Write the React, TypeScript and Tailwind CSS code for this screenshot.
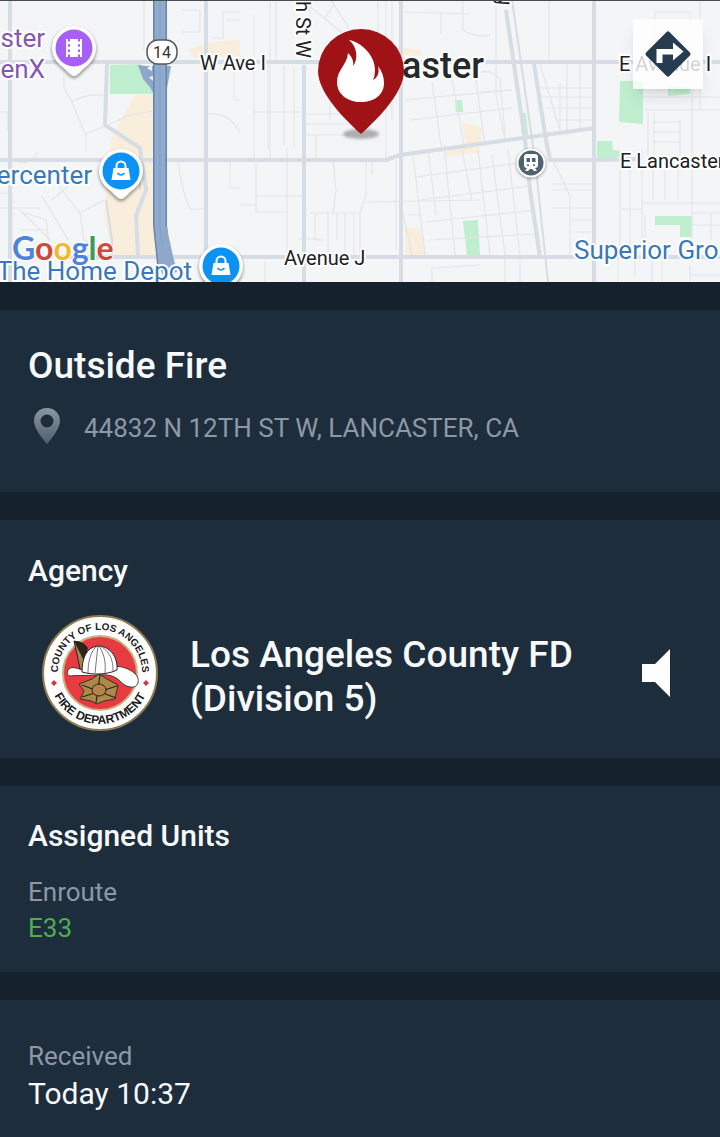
import type { ReactNode } from 'react';

const PARKS = [
  '110,65 140,64 152,78 155,94 110,94',
  '620,81 643,81 643,124 619,122',
  '668,86 690,88 690,94 668,96',
  '597,141 612,141 613,150 630,152 616,158 597,161',
  '655,216 692,216 692,237 680,237 680,225 655,225',
  '463,221 478,220 480,255 467,255',
  '455,100 462,100 463,112 456,112',
  '520,113 526,113 528,135 522,135',
];

const SANDS = [
  '112,136 135,95 155,95 155,256 113,256 104,215 108,165',
  '188,50 209,42 240,40 240,56 195,58',
  '405,228 420,228 425,255 406,255',
  '462,122 482,128 480,152 445,157 444,152 466,146',
  '403,48 420,50 422,56 403,55',
];

const MINOR = [
  'M0 112H8V130M64 75V88L72 102L86 136V152M72 102Q82 94 104 95M86 134Q110 124 130 115L153 111M144 0V50M0 208H40M0 193H12V250M14 160Q28 168 38 152M20 210L50 240M20 230H48M42 196L68 240M58 185L80 213L104 200M52 200L86 170M50 250L46 220L22 212M80 213L84 240L110 255',
  'M178 162Q182 192 190 209H204M230 162V188H240M208 114Q230 112 240 133M234 64V100H240M181 10H200V32H182M212 38H223V12H240M227 20H240',
  'M254 15V160M254 112H300M276 0V62M284 65V146M268 60V150M303 135H350M316 135V160M330 65V120M304 114H350M303 124H348M294 70V148M270 0V160M310 0V30M331 0L350 30M308 5L345 35M334 4L325 18M378 0V38M386 0V160M392 0V120M400 0V60M402 12L470 14M441 12L441 34M463 0V30Q475 38 490 35',
  'M256 160V212H287V255M287 148V230M256 196H302M240 205H256M333 160L336 190L333 213M366 160V195L360 213M360 213V255M310 213H360M315 213V240H325M328 213V255M345 213V255M337 213V240M354 213V255M365 202L480 200M300 239H320M396 160V250M372 160V175',
  'M413 155L425 255M428 150L436 215M444 145L455 255M462 150L472 200M478 150L490 255M416 177L525 162M420 200L530 186M425 222L536 210M430 240L535 234M492 155L505 255M508 150L520 255M408 215H422M405 100L512 90M410 120L512 108M432 82L442 152M452 80L465 150M476 80L485 146M496 0V95L505 140',
  'M402 210L412 255M432 282V268L480 265M505 255V282M520 255V282M480 72Q494 70 500 80L505 135M480 92L512 90M549 0V60M567 64V135M580 64V130M560 83V135M538 88H595M542 97H595M545 108H595M555 120H595M540 64L560 130M548 150L570 196V255M553 208H595M571 220H595M571 232H595M552 190H595M552 184H595',
  'M655 10V55M656 12H690V30M700 0V28M644 110H720M642 97H720M648 112V160M654 112V160M680 120V160M654 122H680M654 132H680M654 142H680M692 90V255M700 84V110H720M672 84V96M642 150V240M630 160V255M622 209H642M642 203H720M653 160V200M665 160V200M678 160V200M711 213V240M692 213H720M620 162V255M692 225H720M645 215V250M652 257V282M662 257V282M618 260V282M690 275H720M690 265V282M635 260V275M210 257V282M265 262V282M400 260V282',
];

const MAJOR = [
  { d: 'M10 0V282M206 0V282', w: 4 },
  { d: 'M0 62H720', w: 4 },
  { d: 'M0 160H386L400 155L595 128', w: 4 },
  { d: 'M60 257H720', w: 4 },
  { d: 'M304 65V282', w: 4 },
  { d: 'M401 0V282', w: 4 },
  { d: 'M594 0V282', w: 4 },
  { d: 'M548 160L595 160L640 159', w: 4 },
  { d: 'M506 10L525 140L530 190L540 257', w: 4 },
  { d: 'M534 64L546 140L550 160', w: 4 },
  { d: 'M107 64L105 125L140 148L146 190L136 216L138 255', w: 4 },
  { d: 'M106 200L112 240V257M140 150V190', w: 2 },
  { d: 'M512 0L535 160L543 235L548 282', w: 2 },
];

const LABEL = 'font-[Roboto,sans-serif] [paint-order:stroke] stroke-white [stroke-width:4px] [stroke-linejoin:round]';

function PoiPin({ x, y, color, children }: { x: number; y: number; color: string; children: ReactNode }) {
  return (
    <g transform={`translate(${x} ${y})`}>
      <path d="M0 29C-4 29-8 23-14 18A22.500 22.500 0 1 1 14 18C8 23 4 29 0 29Z" fill="#000" opacity=".35" transform="translate(0 1.500)" filter="url(#soft)" />
      <path d="M0 28C-4 28-7 22-14 17A22 22 0 1 1 14 17C7 22 4 28 0 28Z" fill="#fff" />
      <circle r="18.500" fill={color} />
      {children}
    </g>
  );
}

function Bag() {
  return (
    <g>
      <path d="M-7.500-3H7.500L9.500 9H-9.500Z" fill="#fff" />
      <path d="M-4.500-2V-5A4.500 4.500 0 0 1 4.500-5V-2" fill="none" stroke="#fff" strokeWidth="2" />
      <path d="M-3.500 2Q0 6 3.500 2" fill="none" stroke="#0a93f5" strokeWidth="1.600" />
    </g>
  );
}

function IncidentMap() {
  return (
    <div className="relative h-[282px] overflow-hidden border-t border-[#4b4b52] bg-[#f4f5f6]">
      <svg viewBox="0 1 720 281" preserveAspectRatio="xMidYMid slice" className="block h-full w-full" role="img" aria-label="Incident map">
        <defs>
          <filter id="soft" x="-50%" y="-50%" width="200%" height="200%">
            <feGaussianBlur stdDeviation="1.5" />
          </filter>
        </defs>
        {SANDS.map(p => <polygon key={p} points={p} fill="#f8eedb" />)}
        {PARKS.map(p => <polygon key={p} points={p} fill="#bfefcf" />)}
        {MINOR.map(d => <path key={d} d={d} fill="none" stroke="#e3e6e9" strokeWidth="1.200" />)}
        {MAJOR.map(r => <path key={r.d} d={r.d} fill="none" stroke="#d6dde4" strokeWidth={r.w} strokeLinejoin="round" />)}

        {/* highway 14 with its ramps */}
        <path d="M138 65L147 66L154 66L171 66L166 94L154 94Q150 86 143 79Z" fill="#8fa8ca" />
        <path d="M147 68L152 65V71ZM149 77L154 76V82Z" fill="#f4f5f6" />
        <path d="M160 0V225L164 264" fill="none" stroke="#6885ae" strokeWidth="14" />
        <path d="M160 0V225L164 264" fill="none" stroke="#90aacd" strokeWidth="11" />
        <path d="M160 0V225L164 264" fill="none" stroke="#839ec4" strokeWidth="1" />
        <path d="M166 224L173 256L177 272L163 276L158 262Z" fill="#8fa8ca" />
        <rect x="147" y="40" width="30" height="24" rx="11" fill="#fff" stroke="#55585c" strokeWidth="1.500" />
        <text x="162" y="58" textAnchor="middle" fontSize="16" fill="#333" className="font-[Roboto,sans-serif]">14</text>

        <g className={LABEL} fontSize="20" fill="#202124">
          <text x="200" y="70">W Ave I</text>
          <text x="284" y="265">Avenue J</text>
          <text x="619" y="71">E Avenue I</text>
          <text x="620" y="168">E Lancaster</text>
          <text transform="translate(296 1) rotate(90)">h St W</text>
          <text transform="translate(497 -2) rotate(75)">y</text>
        </g>
        <text x="484" y="78" textAnchor="end" fontSize="36" fontWeight="500" fill="#26282b" className={LABEL}>Lancaster</text>

        <g className={LABEL} fontSize="26">
          <text x="45" y="47" textAnchor="end" fill="#8457b5">ster</text>
          <text x="45" y="78" textAnchor="end" fill="#8457b5">enX</text>
          <text x="92" y="184" textAnchor="end" fill="#3b78b8">ercenter</text>
          <text x="574" y="259" fill="#3b78b8">Superior Gro</text>
          <text x="192" y="280" textAnchor="end" fill="#3b78b8">The Home Depot</text>
        </g>

        <PoiPin x={74} y={48} color="#a75ff5">
          <rect x="-8" y="-9" width="16" height="18" fill="#fff" />
          <path d="M-5-9V9M5-9V9" stroke="#a75ff5" strokeWidth="2" strokeDasharray="2.500 2.700" />
        </PoiPin>
        <PoiPin x={121} y={171} color="#0a93f5"><Bag /></PoiPin>
        <PoiPin x={221} y={266} color="#0a93f5"><Bag /></PoiPin>

        {/* rail station */}
        <circle cx="531" cy="164" r="15" fill="#000" opacity=".3" filter="url(#soft)" />
        <circle cx="531" cy="163" r="13.500" fill="#4e6270" stroke="#fff" strokeWidth="2" />
        <path d="M527 154H535Q538 154 538 157V165Q538 168 535 168L537 171H534L532 169H530L528 171H525L527 168Q524 168 524 165V157Q524 154 527 154Z" fill="#fff" />
        <path d="M526.500 158H530V162H526.500ZM532 158H535.500V162H532ZM527 164.500H529V166H527ZM533 164.500H535V166H533Z" fill="#4e6270" />

        <text x="12" y="260" fontSize="32" fontWeight="700" className="font-[Lato,sans-serif] [paint-order:stroke] stroke-white [stroke-width:2px]">
          <tspan fill="#4f82db">G</tspan>
          <tspan fill="#d1483b">o</tspan>
          <tspan fill="#efb92b">o</tspan>
          <tspan fill="#4f82db">g</tspan>
          <tspan fill="#3c9a51">l</tspan>
          <tspan fill="#d1483b">e</tspan>
        </text>

        {/* incident marker */}
        <ellipse cx="361" cy="134" rx="18" ry="5" fill="#444" opacity=".4" filter="url(#soft)" />
        <path d="M361 134C350 124 318 95 318 71A43 42 0 0 1 404 71C404 95 372 124 361 134Z" fill="#9f1317" />
        <path d="M349 40C361 42 375 55 375 70Q375 76 373 80C377 78 380 73 378 66C382 71 384 77 384 83C384 95 374 102 361 102C347 102 337 94 337 82C337 70 347 65 348 53C352 57 354 61 353 66C358 60 358 47 349 40Z" fill="#fff" />
      </svg>
      <button type="button" aria-label="Directions" className="absolute top-[18px] right-[17px] flex size-[70px] items-center justify-center bg-white/80 shadow-lg">
        <svg viewBox="0 0 48 48" className="size-12">
          <rect x="7.500" y="7.500" width="33" height="33" rx="2" transform="rotate(45 24 24)" fill="#273c50" />
          <path d="M12.500 33V19H29V12.500L39.500 21.500L29 30.500V24.500H18.500V33Z" fill="#fff" />
        </svg>
      </button>
    </div>
  );
}

function Seal() {
  return (
    <svg viewBox="0 0 116 116" className="size-[116px] shrink-0" role="img" aria-label="County of Los Angeles Fire Department">
      <defs>
        <path id="sealTop" d="M17 66A42 42 0 1 1 99 66" />
        <path id="sealBottom" d="M7 58A51 51 0 0 0 109 58" />
      </defs>
      <circle cx="58" cy="58" r="57" fill="#fff" stroke="#8d7b54" strokeWidth="2" />
      <circle cx="58" cy="58" r="37" fill="#e73b42" stroke="#c9b385" strokeWidth="2" />
      <g fontWeight="700" fill="#1c1c1c" className="font-[Liberation_Sans,sans-serif]">
        <text fontSize="10" textAnchor="middle"><textPath href="#sealTop" startOffset="50%">COUNTY OF LOS ANGELES</textPath></text>
        <text fontSize="12" textAnchor="middle"><textPath href="#sealBottom" startOffset="50%">FIRE DEPARTMENT</textPath></text>
      </g>
      <path d="M12 65L15 68L12 71L9 68ZM104 65L107 68L104 71L101 68Z" fill="#d2364a" />
      <path d="M32 26Q38 26 44 31L46 54L39 58Z" fill="#a5854d" stroke="#222" strokeWidth="1" />
      <path d="M32 26Q40 25 46 33L42 46Z" fill="#2a251c" />
      <path d="M28 53C36 51 41 58 52 56C66 54 72 50 80 52C91 55 98 61 96 68C94 74 86 73 80 68C74 61 67 59 55 60C43 61 36 60 28 61C24 60 25 55 28 53Z" fill="#fff" stroke="#222" strokeWidth=".8" />
      <path d="M40 57C40 44 44 32 56 31C68 31 76 42 75 55C65 60 50 60 40 57Z" fill="#fff" stroke="#222" strokeWidth="1" />
      <path d="M56 30L53 58M56 30C48 36 46 48 46 58M56 30C62 38 64 46 63 58M56 30C69 36 71 46 71 56" fill="none" stroke="#555" strokeWidth=".8" />
      <path d="M37 69L50 64L57 59L65 64L76 70L73 84L62 86L55 89L49 86L38 84L42 76Z" fill="#aa8949" stroke="#3a2f1c" strokeWidth="1" />
      <path d="M40 70L74 83M40 82L75 71M58 60L54 88" stroke="#2a251c" strokeWidth="1.200" />
      <ellipse cx="57" cy="75" rx="7" ry="6" fill="#b9824a" stroke="#2a251c" strokeWidth="1" />
    </svg>
  );
}

export default function App() {
  return (
    <main className="flex min-h-screen flex-col gap-7 bg-[#15222d] font-[Roboto,sans-serif] text-[#f7fafc]">
      <IncidentMap />

      <section className="bg-[#1e2d3c] px-7 pt-8 pb-[46px]">
        <h1 className="text-[37px] leading-[48px] font-medium">Outside Fire</h1>
        <div className="mt-5 flex items-center text-[26px] leading-9 text-[#8c98a6]">
          <svg viewBox="0 2 36 36" className="mr-5 size-9 shrink-0 overflow-visible" aria-hidden="true">
            <defs>
              <linearGradient id="pinFade" x1="0" y1="0" x2="0" y2="1">
                <stop offset="0" stopColor="#8c97a3" />
                <stop offset="1" stopColor="#4f5c69" />
              </linearGradient>
            </defs>
            <path fillRule="evenodd" d="M19 0C11 0 6 6 6 13C6 22 19 36 19 36S32 22 32 13C32 6 27 0 19 0ZM19 6.500A6.500 6.500 0 1 1 19 19.500A6.500 6.500 0 1 1 19 6.500Z" fill="url(#pinFade)" />
          </svg>
          <span>44832 N 12TH ST W, LANCASTER, CA</span>
        </div>
      </section>

      <section className="bg-[#1e2d3c] px-7 pt-[31px] pb-[27px]">
        <h2 className="text-[30px] leading-10 font-medium">Agency</h2>
        <div className="mt-6 flex items-center pl-[14px]">
          <Seal />
          <p className="ml-8 flex-1 pt-2 text-[37px] leading-[44px] font-medium">
            Los Angeles County FD<br />(Division 5)
          </p>
          <button type="button" aria-label="Play audio" className="mr-[22px]">
            <svg viewBox="0 0 28 48" className="h-12 w-7">
              <path d="M0 15H13L28 0V48L13 33H0Z" fill="#fff" />
            </svg>
          </button>
        </div>
      </section>

      <section className="bg-[#1e2d3c] px-7 pt-[30px] pb-[26px]">
        <h2 className="text-[30px] leading-10 font-medium">Assigned Units</h2>
        <p className="mt-[18px] text-[26px] leading-9 text-[#8c98a6]">Enroute</p>
        <p className="text-[26px] leading-9 text-[#4caf50]">E33</p>
      </section>

      <section className="grow bg-[#1e2d3c] px-7 pt-[38px]">
        <p className="text-[26px] leading-9 text-[#8c98a6]">Received</p>
        <p className="text-[30px] leading-10">Today 10:37</p>
      </section>
    </main>
  );
}
